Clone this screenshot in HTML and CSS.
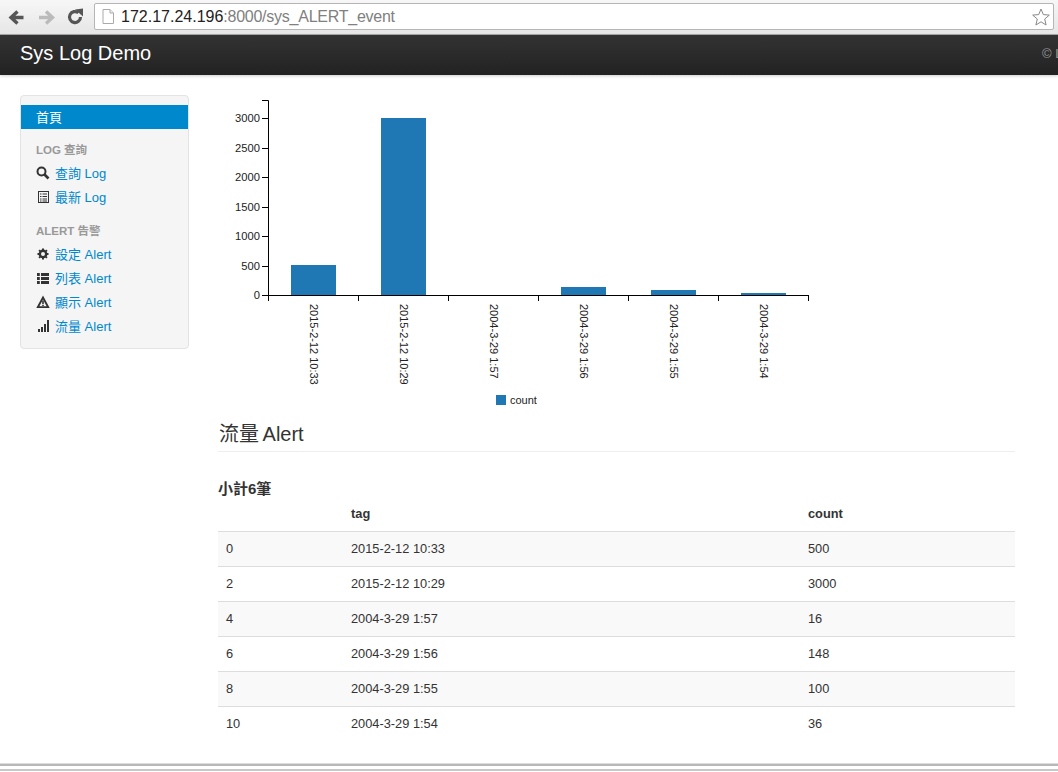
FILE: index.html
```html
<!DOCTYPE html>
<html lang="zh-TW">
<head>
    <meta charset="UTF-8">
    <title>Sys Log Demo</title>
    <link rel="stylesheet" href="styles.css">
</head>
<body>
    <div class="browser-bar">
        <svg class="nav-icon" width="84" height="24" viewBox="0 0 84 24">
            <path d="M24.500 13.500H13M18.500 7.500L12 13.500L18.500 19.500" transform="translate(-1 -2)" fill="none" stroke="#555" stroke-width="3.400"/>
            <path d="M39 13.500H51M46 7.500L52.500 13.500L46 19.500" transform="translate(0 -2)" fill="none" stroke="#bbb" stroke-width="3.400"/>
            <path d="M80.500 11A5.500 5.500 0 1 1 78.500 6.800" fill="none" stroke="#555" stroke-width="3.200"/>
            <path d="M75 3.500L83 2.500V10.500Z" fill="#555"/>
        </svg>
        <div class="address">
            <svg class="page-icon" width="12" height="15" viewBox="0 0 12 15">
                <path d="M1 .5H8L11.500 4V14.500H1Z" fill="#fff" stroke="#aaa"/>
                <path d="M8 .5V4H11.500" fill="#eee" stroke="#aaa"/>
            </svg>
            <span class="host">172.17.24.196</span><span class="url-rest">:8000/sys_ALERT_event</span>
            <svg class="star" width="18" height="18" viewBox="0 0 18 18">
                <path d="M9 1L11.300 6.600L17.300 7.100L12.700 11L14.100 17L9 13.800L3.900 17L5.300 11L.700 7.100L6.700 6.600Z" fill="#fff" stroke="#888"/>
            </svg>
        </div>
    </div>

    <div class="navbar">
        <a class="brand">Sys Log Demo</a>
        <span class="copyright">© Log</span>
    </div>

    <div class="page">
        <div class="sidebar">
            <a class="active-item">首頁</a>
            <div class="nav-header">LOG 查詢</div>
            <a class="nav-link">
                <svg width="14" height="14" viewBox="0 0 14 14"><circle cx="5.500" cy="5.500" r="4" fill="none" stroke="#333" stroke-width="2"/><path d="M8.500 8.500L12.500 12.500" stroke="#333" stroke-width="2.600"/></svg>
                <span>查詢 Log</span>
            </a>
            <a class="nav-link">
                <svg width="14" height="14" viewBox="0 0 14 14"><rect x="2.500" y="1.500" width="10" height="11" fill="none" stroke="#333"/><path d="M4 4H5.500M6.500 4H11M4 6.500H5.500M6.500 6.500H11M4 9H5.500M6.500 9H11M4 11H5.500M6.500 11H11" stroke="#333"/></svg>
                <span>最新 Log</span>
            </a>
            <div class="nav-header second">ALERT 告警</div>
            <a class="nav-link">
                <svg width="14" height="14" viewBox="0 0 14 14"><circle cx="7" cy="7" r="3.200" fill="none" stroke="#333" stroke-width="2.400"/><path d="M7 1.500V3M7 11V12.500M1.500 7H3M11 7H12.500M3.100 3.100L4.200 4.200M9.800 9.800L10.900 10.900M10.900 3.100L9.800 4.200M4.200 9.800L3.100 10.900" stroke="#333" stroke-width="2"/></svg>
                <span>設定 Alert</span>
            </a>
            <a class="nav-link">
                <svg width="14" height="14" viewBox="0 0 14 14"><path d="M1 2H3.800V5H1ZM5 2H13V5H5ZM1 6H3.800V9H1ZM5 6H13V9H5ZM1 10H3.800V13H1ZM5 10H13V13H5Z" fill="#333"/></svg>
                <span>列表 Alert</span>
            </a>
            <a class="nav-link">
                <svg width="14" height="14" viewBox="0 0 14 14"><path d="M7 2.500L1.800 12.200H12.200Z" fill="none" stroke="#333" stroke-width="1.800"/><path d="M6.200 5.500H7.800V9H6.200ZM6.200 9.700H7.800V11H6.200Z" fill="#333"/></svg>
                <span>顯示 Alert</span>
            </a>
            <a class="nav-link">
                <svg width="14" height="14" viewBox="0 0 14 14"><path d="M2 10H4V13H2ZM5 8H7V13H5ZM8 5H10V13H8ZM11 1H13V13H11Z" fill="#333"/></svg>
                <span>流量 Alert</span>
            </a>
        </div>

        <div class="main">
            <svg class="chart" width="610" height="319" viewBox="0 0 610 319">
                <g class="bars">
                    <rect x="73" y="171" width="45" height="30"/>
                    <rect x="163" y="24" width="45" height="177"/>
                    <rect x="253" y="201" width="45" height="1"/>
                    <rect x="343" y="193" width="45" height="8"/>
                    <rect x="433" y="196" width="45" height="5"/>
                    <rect x="523" y="199" width="45" height="2"/>
                </g>
                <path class="axis" d="M44 6.500H50.500V201.500M44 24.500H50M44 54.500H50M44 83.500H50M44 113.500H50M44 142.500H50M44 172.500H50M44 201.500H590.500M50.500 201V207M140.500 201V207M230.500 201V207M320.500 201V207M410.500 201V207M500.500 201V207M590.500 201V207"/>
                <g class="y-labels">
                    <text x="42" y="28">3000</text>
                    <text x="42" y="58">2500</text>
                    <text x="42" y="87">2000</text>
                    <text x="42" y="117">1500</text>
                    <text x="42" y="146">1000</text>
                    <text x="42" y="176">500</text>
                    <text x="42" y="205">0</text>
                </g>
                <g class="x-labels">
                    <text transform="translate(92 210) rotate(90)">2015-2-12 10:33</text>
                    <text transform="translate(182 210) rotate(90)">2015-2-12 10:29</text>
                    <text transform="translate(272 210) rotate(90)">2004-3-29 1:57</text>
                    <text transform="translate(362 210) rotate(90)">2004-3-29 1:56</text>
                    <text transform="translate(452 210) rotate(90)">2004-3-29 1:55</text>
                    <text transform="translate(542 210) rotate(90)">2004-3-29 1:54</text>
                </g>
                <rect class="legend-box" x="278" y="301" width="10" height="10"/>
                <text class="legend-text" x="292" y="310">count</text>
            </svg>

            <h2 class="title">流量 Alert</h2>
            <div class="subtotal">小計6筆</div>
            <table class="data">
                <thead>
                    <tr><th class="col-index"></th><th class="col-tag">tag</th><th>count</th></tr>
                </thead>
                <tbody>
                    <tr><td>0</td><td>2015-2-12 10:33</td><td>500</td></tr>
                    <tr><td>2</td><td>2015-2-12 10:29</td><td>3000</td></tr>
                    <tr><td>4</td><td>2004-3-29 1:57</td><td>16</td></tr>
                    <tr><td>6</td><td>2004-3-29 1:56</td><td>148</td></tr>
                    <tr><td>8</td><td>2004-3-29 1:55</td><td>100</td></tr>
                    <tr><td>10</td><td>2004-3-29 1:54</td><td>36</td></tr>
                </tbody>
            </table>
        </div>
    </div>

    <div class="window-edge"></div>
</body>
</html>
```

FILE: styles.css
```css
html, body { height: 772px; overflow: hidden; }
body { margin: 0; display: flex; flex-direction: column; background: #fff; color: #333; font-family: "Liberation Sans", "Noto Sans CJK TC", sans-serif; font-size: 13px; }

.browser-bar { height: 35px; flex: none; display: flex; align-items: flex-start; padding: 3px 4px 0 0; box-sizing: border-box; background: linear-gradient(#f7f7f7, #e6e6e6); border-bottom: 1px solid #a8a8a8; }
.nav-icon { flex: none; margin: 3px 10px 0 0; width: 84px; }
.address { flex: 1; height: 27px; display: flex; align-items: center; box-sizing: border-box; padding: 0 3px 0 7px; background: #fff; border: 1px solid #b5b5b5; border-radius: 2px; font-size: 16px; }
.page-icon { flex: none; margin-right: 7px; }
.host { color: #222; }
.url-rest { color: #808080; letter-spacing: -.25px; }
.star { margin-left: auto; }

.navbar { height: 40px; flex: none; display: flex; align-items: center; box-sizing: border-box; padding: 0 0 3px 20px; overflow: hidden; white-space: nowrap; background: linear-gradient(#333, #222); box-shadow: 0 1px 3px rgba(0,0,0,.2); }
.brand { flex: 0 0 1022px; color: #fff; font-size: 20px; }
.copyright { flex: none; color: #999; font-size: 13px; }

.page { flex: 1; display: flex; align-items: flex-start; padding: 20px 0 0 20px; }

.sidebar { flex: none; width: 167px; padding: 9px 0 11px; background: #f5f5f5; border: 1px solid #e3e3e3; border-radius: 4px; }
.active-item { display: block; height: 24px; line-height: 26px; padding-left: 15px; background: #0088cc; color: #fff; font-size: 13px; }
.nav-header { height: 20px; line-height: 20px; margin-top: 11px; padding-left: 15px; color: #999; font-size: 11.500px; font-weight: bold; }
.nav-header.second { margin-top: 13px; }
.nav-link { display: flex; align-items: center; gap: 5px; height: 24px; padding-left: 15px; color: #0088cc; font-size: 13px; }
.nav-link svg { flex: none; margin-top: 1px; }

.main { flex: none; width: 797px; margin-left: 29px; }
.chart { display: block; margin-top: -1px; }
.bars rect, .legend-box { fill: #1f77b4; }
.axis { fill: none; stroke: #000; stroke-width: 1; }
.chart text { font-family: "Liberation Sans", sans-serif; font-size: 11px; fill: #222; }
.y-labels text { text-anchor: end; font-size: 11.200px; }
.x-labels text { font-size: 11px; }

.title { margin: 0; height: 39px; padding: 4px 0 0 1px; line-height: 34px; box-sizing: border-box; border-bottom: 1px solid #eee; font-size: 20px; font-weight: normal; word-spacing: -2px; color: #333; }
.subtotal { margin-top: 27px; height: 17px; line-height: 20px; font-weight: bold; font-size: 15px; }

.data { width: 100%; border-collapse: collapse; table-layout: fixed; font-size: 12.800px; }
.data th, .data td { height: 32px; padding: 0 8px 2px; text-align: left; border-top: 1px solid #ddd; }
.data th { height: 35px; padding-bottom: 0; border-top: 0; border-bottom: 1px solid #ddd; font-weight: bold; }
.data tbody tr:nth-child(odd) td { background: #f9f9f9; }
.col-index { width: 109px; }
.col-tag { width: 441px; }

.window-edge { flex: none; height: 3px; margin: auto 0 1px; border-top: 2px solid #b8b8b8; border-bottom: 2px solid #c8c8c8; box-shadow: 0 -1px 0 #ddd; background: #fff; }
```
